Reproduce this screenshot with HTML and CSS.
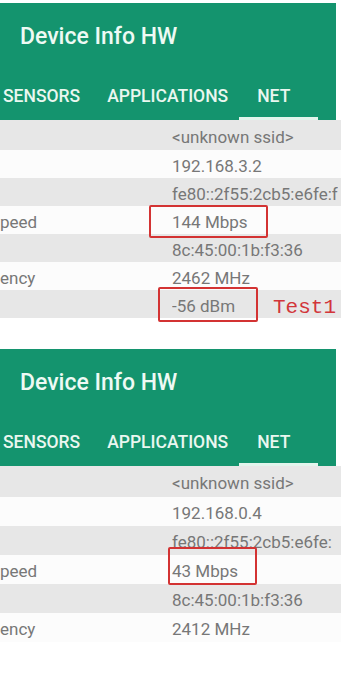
FILE: index.html
```html
<!DOCTYPE html>
<html lang="en">
<head>
  <meta charset="UTF-8" />
  <meta name="viewport" content="width=device-width, initial-scale=1.0"/>
  <title>Device Info HW - NET</title>
  <link rel="stylesheet" href="styles.css">
</head>
<body>
  <div class="page">

    <!-- FIRST SCREEN -->
    <section class="shot first">
      <header class="appbar">
        <h1 class="title">Device Info HW</h1>
        <nav class="tabs">
          <span class="tab">SENSORS</span>
          <span class="tab">APPLICATIONS</span>
          <span class="tab active">NET</span>
        </nav>
      </header>

      <div class="rows">
        <div class="row grey tall"><span class="label"></span><span class="value">&lt;unknown ssid&gt;</span></div>
        <div class="row"><span class="label"></span><span class="value">192.168.3.2</span></div>
        <div class="row grey"><span class="label"></span><span class="value">fe80::2f55:2cb5:e6fe:f</span></div>
        <div class="row"><span class="label">peed</span><span class="value">144 Mbps</span></div>
        <div class="row grey"><span class="label"></span><span class="value">8c:45:00:1b:f3:36</span></div>
        <div class="row"><span class="label">ency</span><span class="value">2462 MHz</span></div>
        <div class="row grey"><span class="label"></span><span class="value">-56 dBm</span></div>
      </div>
    </section>

    <!-- SECOND SCREEN -->
    <section class="shot second">
      <header class="appbar">
        <h1 class="title">Device Info HW</h1>
        <nav class="tabs">
          <span class="tab">SENSORS</span>
          <span class="tab">APPLICATIONS</span>
          <span class="tab active">NET</span>
        </nav>
      </header>

      <div class="rows">
        <div class="row grey tall"><span class="label"></span><span class="value">&lt;unknown ssid&gt;</span></div>
        <div class="row"><span class="label"></span><span class="value">192.168.0.4</span></div>
        <div class="row grey"><span class="label"></span><span class="value">fe80::2f55:2cb5:e6fe:</span></div>
        <div class="row"><span class="label">peed</span><span class="value">43 Mbps</span></div>
        <div class="row grey"><span class="label"></span><span class="value">8c:45:00:1b:f3:36</span></div>
        <div class="row"><span class="label">ency</span><span class="value">2412 MHz</span></div>
      </div>
    </section>

    <!-- red annotations drawn over the screenshots -->
    <div class="mark mark-speed1"></div>
    <div class="mark mark-dbm"></div>
    <div class="mark mark-speed2"></div>
    <div class="note">Test1</div>
  </div>
</body>
</html>
```

FILE: styles.css
```css
* {
  box-sizing: border-box;
}

body {
  margin: 0;
  background: #ffffff;
  font-family: Roboto, 'Noto Sans', sans-serif;
}

.page {
  position: relative;
  width: 341px;
  height: 676px;
  overflow: hidden;
  padding-top: 3px;
}

.shot.second {
  margin-top: 31px;
}

.appbar {
  width: 336px;
  background: #14946e;
  color: #eefaf4;
}

.title {
  margin: 0;
  height: 65px;
  line-height: 68px;
  padding-left: 20px;
  font-size: 23px;
  font-weight: 500;
}

.tabs {
  display: flex;
  padding-left: 3px;
}

.tab {
  height: 52px;
  line-height: 56px;
  font-size: 17.5px;
  font-weight: 500;
  border-bottom: 3px solid transparent;
  color: #eaf7f0;
  white-space: nowrap;
}

.tab + .tab {
  margin-left: 27px;
}

.tab.active {
  margin-left: 11px;
  padding: 0 28px 0 18px;
  border-bottom-color: #e2f5ec;
}

.rows {
  width: 341px;
}

.row {
  display: flex;
  align-items: center;
  height: 28px;
  padding-top: 3px;
  background: #fcfcfc;
  font-size: 17px;
  color: #777777;
  white-space: nowrap;
}

.row.grey {
  background: #e7e7e7;
}

.row.tall {
  height: 30px;
}

.second .row {
  height: 29px;
}

.second .row.tall {
  height: 31px;
}

.label {
  width: 172px;
  flex-shrink: 0;
}

.value {
  overflow: hidden;
}

.mark {
  position: absolute;
  border: 2px solid #d33333;
  border-radius: 2px;
}

.mark-speed1 {
  left: 149px;
  top: 205px;
  width: 119px;
  height: 33px;
}

.mark-dbm {
  left: 158px;
  top: 287px;
  width: 100px;
  height: 35px;
}

.mark-speed2 {
  left: 168px;
  top: 547px;
  width: 89px;
  height: 38px;
}

.note {
  position: absolute;
  left: 273px;
  top: 296px;
  font-family: 'Liberation Mono', monospace;
  font-size: 21px;
  color: #d2353a;
}
```
